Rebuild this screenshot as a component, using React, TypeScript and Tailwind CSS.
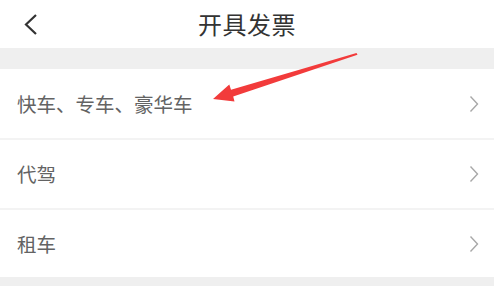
import React from "react";

const rows = [
  { label: "快车、专车、豪华车", height: "h-[71px]" },
  { label: "代驾", height: "h-[70px]" },
  { label: "租车", height: "h-[67px]" },
];

const Chevron: React.FC = () => (
  <svg width="10" height="18" viewBox="0 0 10 18" fill="none">
    <path d="M1.5 1.5 L8.5 9 L1.5 16.5" stroke="#a8a8a8" strokeWidth="1.4" />
  </svg>
);

const App: React.FC = () => {
  return (
    <div
      className="relative w-full min-h-[286px] bg-[#efefef] overflow-hidden"
      style={{ fontFamily: '"Noto Sans CJK SC", "Noto Sans", sans-serif' }}
    >
      {/* Header */}
      <header className="grid grid-cols-[1fr_auto_1fr] items-center h-[48px] bg-white">
        <div className="pl-[22px] flex items-center">
          <svg width="18" height="24" viewBox="0 0 18 24" fill="none">
            <path d="M14 3 L4 12.5 L14 22" stroke="#333333" strokeWidth="2.2" />
          </svg>
        </div>
        <h1 className="text-[24px] leading-none text-[#333333] tracking-[0.5px]">开具发票</h1>
        <div />
      </header>

      <div className="h-[21px]" />

      {/* List */}
      <ul className="bg-white">
        {rows.map((row, i) => (
          <li
            key={row.label}
            className={`flex items-center justify-between pl-[17px] pr-[15px] ${row.height} ${
              i < rows.length - 1 ? "border-b-2 border-[#f3f3f3]" : ""
            }`}
          >
            <span className="text-[19.5px] leading-none text-[#636363]">{row.label}</span>
            <Chevron />
          </li>
        ))}
      </ul>

      {/* Annotation arrow */}
      <svg
        className="absolute top-0 left-0 pointer-events-none"
        width="494"
        height="286"
        viewBox="0 0 494 286"
      >
        <polygon
          points="213,99 234.5,101.5 233.2,96.4 357.5,54.8 356.5,53 231,89.7 229.3,84.5"
          fill="#f23b3b"
        />
      </svg>
    </div>
  );
};

export default App;
